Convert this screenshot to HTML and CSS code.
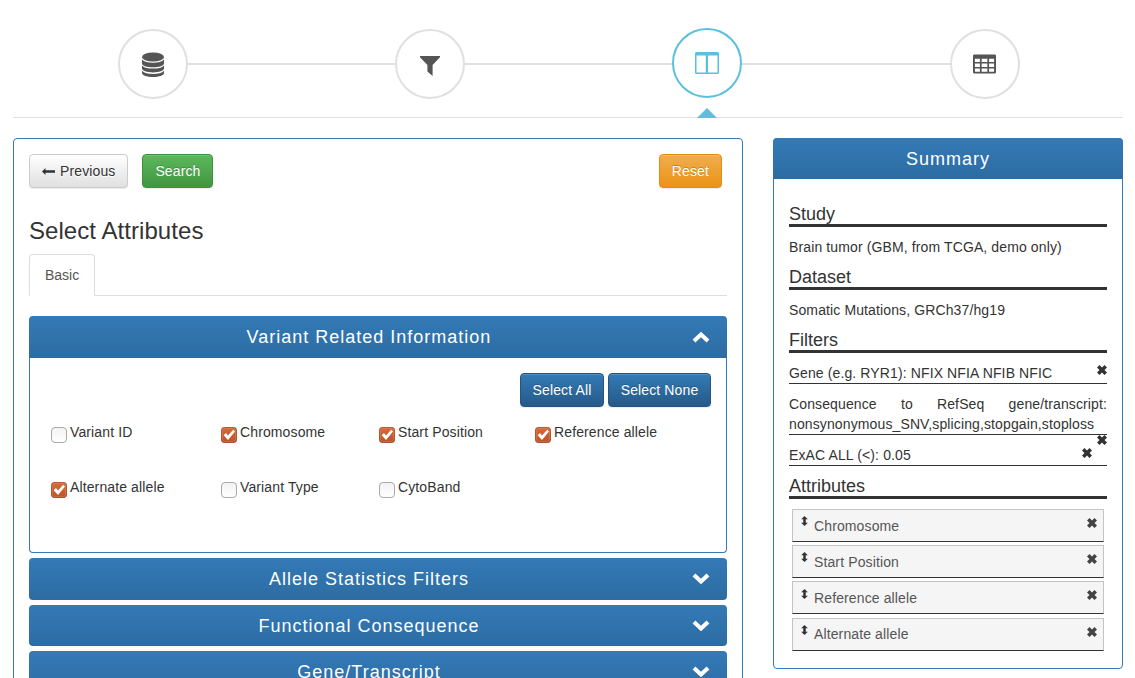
FILE: index.html
```html
<!DOCTYPE html>
<html lang="en">

<head>
    <meta charset="UTF-8">
    <title>Select Attributes</title>
    <link rel="stylesheet" href="styles.css">
</head>

<body>
    <svg class="icon-defs" width="0" height="0">
        <symbol id="i-x" viewBox="0 0 12 12">
            <path d="M3 0 6 3 9 0 12 3 9 6 12 9 9 12 6 9 3 12 0 9 3 6 0 3Z" />
        </symbol>
        <symbol id="i-sort" viewBox="0 0 8 12">
            <path d="M4 0 8 4H5.500V8H8L4 12 0 8H2.500V4H0Z" />
        </symbol>
        <symbol id="i-up" viewBox="0 0 18 12">
            <path d="M9 .8 17.4 8.6 14.6 11.4 9 6.2 3.4 11.4.6 8.6Z" />
        </symbol>
        <symbol id="i-down" viewBox="0 0 18 12">
            <path d="M9 11.2 17.4 3.4 14.6.6 9 5.8 3.4.6.6 3.4Z" />
        </symbol>
        <symbol id="i-check" viewBox="0 0 16 16">
            <path d="M2.600 8.200 5 6 7 8.400 12.200 2.800 14 4.600 7 13Z" />
        </symbol>
    </svg>

    <div class="page">
        <div class="steps">
            <div class="step step-db">
                <svg viewBox="0 0 22 26" width="22" height="26">
                    <ellipse cx="11" cy="5" rx="11" ry="4.6" />
                    <path d="M0 7.6C2 10 6 10.8 11 10.8S20 10 22 7.6V11.4C22 13.6 17 15.2 11 15.2S0 13.6 0 11.4Z" />
                    <path d="M0 13.4C2 15.8 6 16.6 11 16.6S20 15.800 22 13.4V16.6C22 18.8 17 20.4 11 20.4S0 18.8 0 16.6Z" />
                    <path d="M0 18.8C2 21.2 6 22 11 22S20 21.2 22 18.8V21C22 23.4 17 25 11 25S0 23.4 0 21Z" />
                </svg>
            </div>
            <div class="step step-filter">
                <svg viewBox="0 0 20 20" width="20" height="20">
                    <path d="M0 0H20V1.2L12.6 9V20L7.4 15.6V9L0 1.2Z" />
                </svg>
            </div>
            <div class="step step-active">
                <svg viewBox="0 0 24 22" width="24" height="22">
                    <path fill-rule="evenodd" d="M1.500 0H22.500A1.500 1.500 0 0 1 24 1.500V20.500A1.500 1.500 0 0 1 22.500 22H1.500A1.500 1.500 0 0 1 0 20.500V1.500A1.500 1.500 0 0 1 1.500 0ZM1.500 3.500V20.500H10.800V3.500ZM13 3.500V20.500H22.500V3.500Z" />
                </svg>
            </div>
            <div class="step">
                <svg viewBox="0 0 24 20" width="23" height="20">
                    <path fill-rule="evenodd" d="M1.500 0H22.500A1.500 1.500 0 0 1 24 1.500V18.500A1.500 1.500 0 0 1 22.500 20H1.500A1.500 1.500 0 0 1 0 18.500V1.500A1.500 1.500 0 0 1 1.500 0ZM2 4.500V8H7.200V4.500ZM9 4.500V8H15V4.500ZM16.800 4.500V8H22V4.500ZM2 9.600V13H7.200V9.600ZM9 9.600V13H15V9.600ZM16.800 9.600V13H22V9.600ZM2 14.600V18H7.200V14.600ZM9 14.600V18H15V14.600ZM16.800 14.600V18H22V14.600Z" />
                </svg>
            </div>
        </div>

        <div class="columns">
            <div class="main-panel">
                <div class="toolbar">
                    <button class="btn btn-default" type="button"><svg class="arrow" viewBox="0 0 13 7"><path d="M3.500 0V2.300H13V4.700H3.500V7L0 3.500Z" /></svg>Previous</button>
                    <button class="btn btn-success" type="button">Search</button>
                    <button class="btn btn-warning" type="button">Reset</button>
                </div>

                <h3>Select Attributes</h3>

                <div class="tabs">
                    <div class="tab">Basic</div>
                </div>

                <div class="group group-open">
                    <div class="group-head">
                        <span>Variant Related Information</span>
                        <svg class="chevron"><use href="#i-up" /></svg>
                    </div>
                    <div class="group-body">
                        <div class="select-btns">
                            <button class="btn btn-primary" type="button">Select All</button>
                            <button class="btn btn-primary" type="button">Select None</button>
                        </div>
                        <div class="attr-grid">
                            <label class="attr"><span class="check"></span>Variant ID</label>
                            <label class="attr"><span class="check checked"><svg><use href="#i-check" /></svg></span>Chromosome</label>
                            <label class="attr"><span class="check checked"><svg><use href="#i-check" /></svg></span>Start Position</label>
                            <label class="attr"><span class="check checked"><svg><use href="#i-check" /></svg></span>Reference allele</label>
                            <label class="attr"><span class="check checked"><svg><use href="#i-check" /></svg></span>Alternate allele</label>
                            <label class="attr"><span class="check"></span>Variant Type</label>
                            <label class="attr"><span class="check"></span>CytoBand</label>
                        </div>
                    </div>
                </div>

                <div class="group">
                    <div class="group-head">
                        <span>Allele Statistics Filters</span>
                        <svg class="chevron"><use href="#i-down" /></svg>
                    </div>
                </div>
                <div class="group">
                    <div class="group-head">
                        <span>Functional Consequence</span>
                        <svg class="chevron"><use href="#i-down" /></svg>
                    </div>
                </div>
                <div class="group">
                    <div class="group-head">
                        <span>Gene/Transcript</span>
                        <svg class="chevron"><use href="#i-down" /></svg>
                    </div>
                </div>
            </div>

            <div class="summary">
                <div class="summary-head">Summary</div>
                <div class="summary-body">
                    <h4>Study</h4>
                    <p>Brain tumor (GBM, from TCGA, demo only)</p>
                    <h4>Dataset</h4>
                    <p>Somatic Mutations, GRCh37/hg19</p>
                    <h4>Filters</h4>
                    <div class="filter">
                        Gene (e.g. RYR1): NFIX NFIA NFIB NFIC
                        <svg class="close close-a"><use href="#i-x" /></svg>
                    </div>
                    <div class="filter">
                        Consequence to RefSeq gene/transcript: nonsynonymous_SNV,splicing,stopgain,stoploss
                        <svg class="close close-b"><use href="#i-x" /></svg>
                    </div>
                    <div class="filter filter-last">
                        ExAC ALL (&lt;): 0.05
                        <svg class="close close-c"><use href="#i-x" /></svg>
                    </div>
                    <h4>Attributes</h4>
                    <ul class="chosen">
                        <li><svg class="sort"><use href="#i-sort" /></svg>Chromosome<svg class="close"><use href="#i-x" /></svg></li>
                        <li><svg class="sort"><use href="#i-sort" /></svg>Start Position<svg class="close"><use href="#i-x" /></svg></li>
                        <li><svg class="sort"><use href="#i-sort" /></svg>Reference allele<svg class="close"><use href="#i-x" /></svg></li>
                        <li><svg class="sort"><use href="#i-sort" /></svg>Alternate allele<svg class="close"><use href="#i-x" /></svg></li>
                    </ul>
                </div>
            </div>
        </div>
    </div>
</body>

</html>
```

FILE: styles.css
```css
html,
body {
    height: 678px;
    margin: 0;
    overflow: hidden;
}

body {
    font-family: "Liberation Sans", Arial, sans-serif;
    font-size: 14px;
    line-height: 20px;
    letter-spacing: 0.12px;
    color: #333;
    background-color: #fff;
}

* {
    box-sizing: border-box;
}

.icon-defs {
    position: absolute;
}

.page {
    padding: 0 12px 0 13px;
}

/* steps */
.steps {
    position: relative;
    display: flex;
    justify-content: space-between;
    height: 118px;
    margin-bottom: 20px;
    padding: 29px 103px 0 105px;
    border-bottom: 1px solid #e0e0e0;
}

.steps::before {
    content: "";
    position: absolute;
    left: 140px;
    right: 140px;
    top: 63px;
    height: 2px;
    background-color: #e0e0e0;
}

.step {
    position: relative;
    display: flex;
    align-items: center;
    justify-content: center;
    width: 70px;
    height: 70px;
    border: 2px solid #e0e0e0;
    border-radius: 50%;
    background-color: #fff;
}

.step svg {
    fill: #555;
}

.step-db {
    padding-top: 2px;
}

.step-filter {
    padding-top: 4px;
}

.step-active {
    border-color: #5bc0de;
    margin: -1px 1px 0 -1px;
}

.step-active svg {
    fill: #5bc0de;
}

.step-active::after {
    content: "";
    position: absolute;
    left: 23px;
    bottom: -22px;
    border: 10px solid transparent;
    border-top: 0;
    border-bottom-color: #5bc0de;
}

.columns {
    display: flex;
    justify-content: space-between;
    align-items: flex-start;
}

/* left panel */
.main-panel {
    width: 730px;
    height: 560px;
    padding: 15px;
    border: 1px solid #337ab7;
    border-radius: 4px;
}

.toolbar {
    display: flex;
    gap: 14px;
    padding-right: 5px;
}

.toolbar .btn-warning {
    margin-left: auto;
}

.btn {
    height: 34px;
    padding: 6px 12px;
    font-family: inherit;
    font-size: 14px;
    line-height: 20px;
    letter-spacing: 0.12px;
    border: 1px solid transparent;
    border-radius: 4px;
    text-shadow: 0 -1px 0 rgba(0, 0, 0, 0.2);
    box-shadow: inset 0 1px 0 rgba(255, 255, 255, 0.15), 0 1px 1px rgba(0, 0, 0, 0.075);
    color: #fff;
}

.btn-default {
    color: #333;
    text-shadow: 0 1px 0 #fff;
    background-image: linear-gradient(#fff, #e0e0e0);
    border-color: #ccc;
}

.arrow {
    width: 13px;
    height: 7px;
    margin-right: 5px;
    vertical-align: 1px;
    fill: #333;
}

.btn-success {
    width: 71px;
    padding: 6px 0;
    background-image: linear-gradient(#5cb85c, #419641);
    border-color: #3e8f3e;
}

.btn-warning {
    background-image: linear-gradient(#f0ad4e, #eb9316);
    border-color: #e38d13;
}

.btn-primary {
    padding: 6px 0;
    background-image: linear-gradient(#337ab7, #265a88);
    border-color: #245580;
}

.btn-primary:first-child {
    width: 84px;
}

.btn-primary:last-child {
    width: 103px;
}

h3 {
    margin: 26px 0 7px;
    font-size: 24px;
    font-weight: 500;
    line-height: 33px;
    letter-spacing: 0.06px;
}

.tabs {
    display: flex;
    margin-bottom: 20px;
    border-bottom: 1px solid #ddd;
}

.tab {
    margin-bottom: -1px;
    padding: 10px 15px;
    letter-spacing: 0;
    color: #555;
    border: 1px solid #ddd;
    border-bottom-color: #fff;
    border-radius: 4px 4px 0 0;
    background-color: #fff;
}

.group {
    margin-bottom: 5px;
}

.group-head {
    position: relative;
    height: 41.5px;
    padding-right: 18px;
    font-size: 18px;
    line-height: 42px;
    letter-spacing: 1px;
    text-align: center;
    color: #fff;
    background-image: linear-gradient(#337ab7, #2d6ca2);
    border-radius: 4px;
}

.group-open .group-head {
    border-radius: 4px 4px 0 0;
}

.chevron {
    position: absolute;
    right: 17px;
    top: 15px;
    width: 18px;
    height: 12px;
    fill: #fff;
}

.group-body {
    height: 195.5px;
    padding: 15px 15px 0 21px;
    border: 1px solid #337ab7;
    border-top: 0;
    border-radius: 0 0 4px 4px;
}

.select-btns {
    display: flex;
    justify-content: flex-end;
    gap: 4px;
}

.attr-grid {
    display: grid;
    grid-template-columns: 170px 158px 156px 1fr;
    grid-auto-rows: 55px;
    margin-top: 15px;
}

.attr {
    display: flex;
    align-items: flex-start;
    gap: 3px;
}

.check {
    flex: none;
    width: 16px;
    height: 16px;
    margin-top: 5px;
    border: 1.5px solid #aaa;
    border-radius: 4px;
    background-image: linear-gradient(#f2f2f2, #fff);
}

.check svg {
    display: block;
    width: 16px;
    height: 16px;
    fill: #fff;
}

.checked {
    border: 0;
    background-image: linear-gradient(#d96a3a, #bb5228);
    box-shadow: inset 0 0 0 1px rgba(160, 70, 30, 0.6), inset 0 0 0 2px rgba(255, 255, 255, 0.12);
}

/* summary */
.summary {
    width: 350px;
    height: 531px;
    border: 1px solid #337ab7;
    border-radius: 4px;
}

.summary-head {
    height: 41px;
    margin: -1px -1px 0;
    font-size: 18px;
    line-height: 42px;
    letter-spacing: 1px;
    text-align: center;
    color: #fff;
    background-image: linear-gradient(#337ab7, #2d6ca2);
    border-radius: 4px 4px 0 0;
}

.summary-body {
    padding: 24px 15px 0;
}

h4 {
    margin: 0 0 10px;
    padding-top: 2px;
    font-size: 18px;
    font-weight: 500;
    line-height: 19px;
    letter-spacing: 0;
    border-bottom: 3px solid #333;
}

.summary-body p {
    margin: 0 0 9px;
}

.filter {
    position: relative;
    margin-bottom: 10px;
    text-align: justify;
    border-bottom: 1px solid #333;
}

.filter-last {
    margin-bottom: 9px;
}

.close {
    width: 10px;
    height: 10px;
    fill: #333;
}

.filter .close {
    position: absolute;
}

.close-a {
    right: 0;
    top: 2px;
}

.close-b {
    right: 0;
    bottom: -11px;
}

.close-c {
    right: 15px;
    top: 3px;
}

.chosen {
    margin: 9.7px 0 0;
    padding: 0 3px;
    list-style: none;
}

.chosen li {
    position: relative;
    height: 33px;
    margin-bottom: 3.2px;
    padding: 5.5px 0 0 21px;
    color: #555;
    background-color: #f5f5f5;
    border: 1px solid #c4c4c4;
    border-bottom: 1px solid #333;
}

.chosen .sort {
    position: absolute;
    left: 8px;
    top: 6.3px;
    width: 7px;
    height: 10px;
    fill: #333;
}

.chosen .close {
    position: absolute;
    right: 6px;
    top: 8px;
    fill: #444;
}
```
